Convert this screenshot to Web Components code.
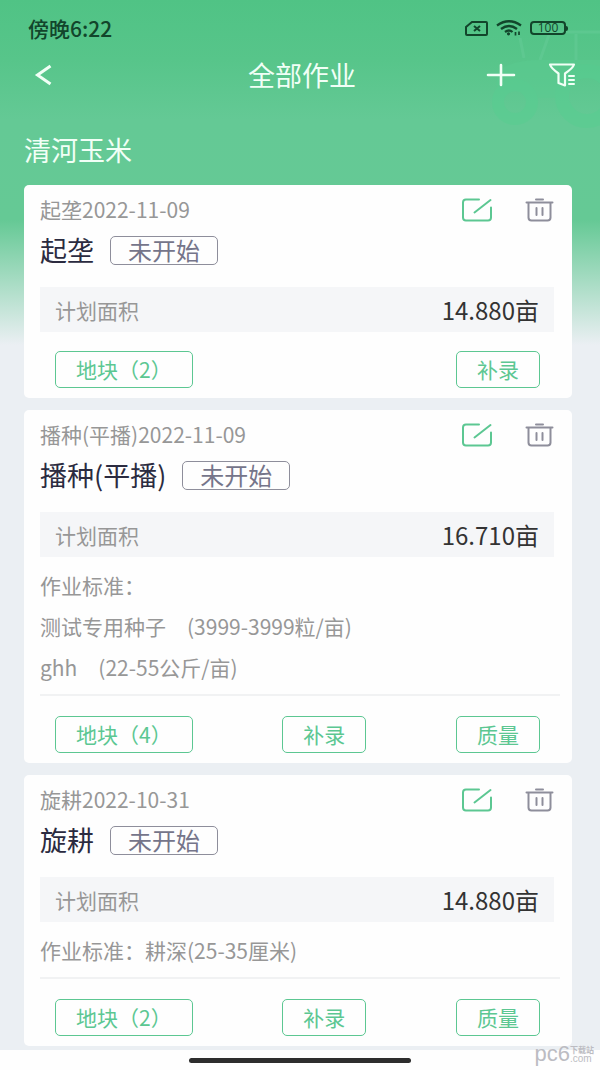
<!DOCTYPE html>
<html lang="zh-CN">
<head>
<meta charset="utf-8">
<meta name="viewport" content="width=device-width, initial-scale=1">
<title>全部作业</title>
<style>
  body {
    margin: 0;
    font-family: "Noto Sans CJK SC", "Noto Sans", sans-serif;
    font-size: 21px;
    --green: #5cc792;
    --muted: #979797;
    --ink: #2b2b40;
  }
</style>
</head>
<body>
<farm-app>
  <status-bar slot="top" time="傍晚6:22" battery="100"></status-bar>
  <nav-bar slot="top">全部作业</nav-bar>
  <span slot="group">清河玉米</span>

  <task-card date="起垄2022-11-09" name="起垄" status="未开始" area="14.880亩">
    <line-button slot="actions">地块（2）</line-button>
    <line-button slot="actions">补录</line-button>
  </task-card>

  <task-card date="播种(平播)2022-11-09" name="播种(平播)" status="未开始" area="16.710亩">
    <task-spec slot="specs">作业标准：</task-spec>
    <task-spec slot="specs">测试专用种子　(3999-3999粒/亩)</task-spec>
    <task-spec slot="specs">ghh　(22-55公斤/亩)</task-spec>
    <line-button slot="actions">地块（4）</line-button>
    <line-button slot="actions">补录</line-button>
    <line-button slot="actions">质量</line-button>
  </task-card>

  <task-card date="旋耕2022-10-31" name="旋耕" status="未开始" area="14.880亩">
    <task-spec slot="specs">作业标准：耕深(25-35厘米)</task-spec>
    <line-button slot="actions">地块（2）</line-button>
    <line-button slot="actions">补录</line-button>
    <line-button slot="actions">质量</line-button>
  </task-card>

  <home-bar slot="bottom"></home-bar>
</farm-app>

<script>
const define = (name, html, setup) => {
  const template = document.createElement('template');
  template.innerHTML = html;
  customElements.define(name, class extends HTMLElement {
    constructor() {
      super();
      this.attachShadow({ mode: 'open' }).append(template.content.cloneNode(true));
    }
    connectedCallback() {
      if (setup) setup(this, this.shadowRoot);
    }
  });
};

define('farm-app', `
  <style>
    :host {
      display: flex; flex-direction: column; min-height: 100vh; position: relative;
      background: linear-gradient(#50c385 0, #57c58a 60px, #64c995 120px, #65c995 220px, #65c99500 345px), #ebeff3;
    }
    .tractor { position: absolute; top: 24px; right: 0; width: 112px; height: 104px; }
    header { position: relative; }
    h2 { margin: 36px 24px 15px; font-size: 27px; line-height: 40px; font-weight: 400; color: #f1fff6; }
    main { flex: 1; display: flex; flex-direction: column; gap: 12px; padding: 0 28px 4px 24px; }
  </style>
  <svg class="tractor" viewBox="0 0 112 104" fill="none" stroke="#57ce91" aria-hidden="true">
    <g opacity=".5">
      <path d="M54 8H112M62 8l-10 28M88 10v26M32 14l4 20" stroke="#66cc98" stroke-width="3"/>
      <path d="M10 48q12-12 44-12h58v14q-30-4-42 24H50Q44 52 8 62z" fill="#5acb90" stroke="none"/>
      <circle cx="27" cy="78" r="17" stroke-width="12"/>
      <circle cx="99" cy="72" r="25" stroke-width="14"/>
    </g>
  </svg>
  <header>
    <slot name="top"></slot>
    <h2><slot name="group"></slot></h2>
  </header>
  <main><slot></slot></main>
  <slot name="bottom"></slot>
`);

define('status-bar', `
  <style>
    :host { display: flex; align-items: center; justify-content: space-between; height: 56px; padding: 0 32px 0 28px; color: #12452b; }
    time { font-size: 21px; line-height: 28px; font-weight: 500; }
    .icons { display: flex; align-items: center; gap: 8px; }
    svg { display: block; }
    .battery { display: flex; align-items: center; }
    .level { box-sizing: border-box; width: 36px; height: 14px; border: 2px solid; border-radius: 4px; font: 500 12px/10px "Open Sans", sans-serif; text-align: center; }
    .tip { width: 2px; height: 5px; background: currentColor; border-radius: 0 2px 2px 0; }
  </style>
  <time></time>
  <div class="icons">
    <svg width="23" height="15" viewBox="0 0 23 15" fill="none" stroke="currentColor" stroke-width="2">
      <path d="M7 1H21q1 0 1 1V13q0 1-1 1H2q-1 0-1-1V6z"/><path d="M9 5l6 5M15 5l-6 5"/>
    </svg>
    <svg width="26" height="16" viewBox="0 0 26 16" fill="none" stroke="currentColor" stroke-width="2.3">
      <path d="M1 5.500Q13-3 25 5.500M5 9q8-6 16 0M9 12q4-3 7.500 0"/>
      <circle cx="12.500" cy="13.800" r="1.600" fill="currentColor" stroke="none"/>
      <path d="M19.500 12v3.500M23 11.500V15" stroke-width="1.700"/>
    </svg>
    <div class="battery"><span class="level"></span><span class="tip"></span></div>
  </div>
`, (el, root) => {
  root.querySelector('time').textContent = el.getAttribute('time');
  root.querySelector('.level').textContent = el.getAttribute('battery');
});

define('nav-bar', `
  <style>
    :host { display: grid; grid-template-columns: 1fr auto 1fr; align-items: center; height: 38px; padding: 0 24px 0 28px; color: #f1fff6; }
    h1 { margin: 0; font-size: 27px; line-height: 38px; font-weight: 400; }
    button { display: block; padding: 0; border: 0; background: none; color: inherit; }
    svg { display: block; }
    .tools { display: flex; justify-content: flex-end; gap: 32px; }
  </style>
  <button type="button" aria-label="返回">
    <svg width="32" height="24" viewBox="0 0 32 24" fill="none" stroke="currentColor" stroke-width="3"><path d="M22.500 3L9.500 12l13 9"/></svg>
  </button>
  <h1><slot></slot></h1>
  <div class="tools">
    <button type="button" aria-label="新增">
      <svg width="30" height="24" viewBox="0 0 30 24" fill="none" stroke="currentColor" stroke-width="2.600" stroke-linecap="round"><path d="M2 12H28M15 2V22"/></svg>
    </button>
    <button type="button" aria-label="筛选">
      <svg width="28" height="24" viewBox="0 0 28 24" fill="none" stroke="currentColor" stroke-width="2.200" stroke-linejoin="round" stroke-linecap="round">
        <path d="M2 1.500H26Q25 5 17 10.500V22.500L10.500 20V10.500Q3 5 2 1.500z"/><path d="M21 13h5M21 17h5M21 21h5" stroke-width="2"/>
      </svg>
    </button>
  </div>
`);

define('task-card', `
  <style>
    :host { display: block; padding: 10px 18px 10px 16px; background: #fefefe; border-radius: 5px; }
    .top { display: flex; align-items: center; justify-content: space-between; height: 30px; }
    .date { line-height: 28px; padding-bottom: 2px; color: var(--muted); }
    .tools { display: flex; gap: 32px; }
    .tools button { display: block; padding: 0; border: 0; background: none; color: #8e8e9b; }
    .tools button:first-child { color: var(--green); }
    svg { display: block; }
    .title { display: flex; align-items: center; gap: 16px; height: 36px; margin: 7px 0 19px; }
    h3 { margin: 0; font-size: 27px; line-height: 36px; font-weight: 400; color: var(--ink); }
    .status { box-sizing: border-box; height: 29px; padding: 0 17px; border: 1px solid #8e8e9b; border-radius: 5px; font-size: 24px; line-height: 26px; color: #75758a; }
    .area { display: flex; align-items: center; justify-content: space-between; height: 45px; padding: 0 15px; background: #f5f6f8; color: var(--muted); line-height: 44px; }
    .area strong { font-size: 24px; font-weight: 400; color: #333; }
    .specs { display: flex; flex-direction: column; margin: 8px -6px 0 0; padding-bottom: 6px; border-bottom: 2px solid #f1f2f3; }
    .specs[hidden] { display: none; }
    .actions { display: flex; justify-content: space-between; margin-top: 19px; padding: 0 14px 0 15px; }
    .specs:not([hidden]) + .actions { margin-top: 20px; }
  </style>
  <div class="top">
    <span class="date"></span>
    <div class="tools">
      <button type="button" aria-label="编辑">
        <svg width="32" height="24" viewBox="0 0 32 24" fill="none" stroke="currentColor" stroke-width="2" stroke-linecap="round">
          <path d="M18 1.500H5q-3 0-3 3V19.500q0 3 3 3H27q3 0 3-3V9.500M13.500 14.500L29.500 2"/>
        </svg>
      </button>
      <button type="button" aria-label="删除">
        <svg width="29" height="24" viewBox="0 0 29 24" fill="none" stroke="currentColor" stroke-width="2" stroke-linecap="round">
          <path d="M1.500 4.500H27.500M11 1.500H18M3.500 5V19.500q0 3 3 3H22.500q3 0 3-3V5M11.500 10v7M17.500 10v7"/>
        </svg>
      </button>
    </div>
  </div>
  <div class="title"><h3></h3><span class="status"></span></div>
  <div class="area"><span>计划面积</span><strong></strong></div>
  <div class="specs"><slot name="specs"></slot></div>
  <div class="actions"><slot name="actions"></slot></div>
`, (el, root) => {
  root.querySelector('.date').textContent = el.getAttribute('date');
  root.querySelector('h3').textContent = el.getAttribute('name');
  root.querySelector('.status').textContent = el.getAttribute('status');
  root.querySelector('strong').textContent = el.getAttribute('area');
  root.querySelector('.specs').hidden = !el.querySelector('[slot="specs"]');
});

define('task-spec', `
  <style>:host { display: block; line-height: 41px; color: var(--muted); }</style>
  <slot></slot>
`);

define('line-button', `
  <style>
    :host { display: block; }
    button { display: block; box-sizing: border-box; height: 37px; padding: 0 20px; border: 1px solid var(--green); border-radius: 5px; background: none; font: inherit; line-height: 35px; color: var(--green); }
  </style>
  <button type="button"><slot></slot></button>
`);

define('home-bar', `
  <style>
    :host { display: flex; justify-content: center; align-items: center; height: 20px; background: #fefefe; position: relative; }
    .pill { width: 37%; height: 5px; border-radius: 3px; background: #2d2d2d; }
    .mark { position: absolute; right: 6px; bottom: 4px; display: flex; align-items: center; color: #bcbcc2; font-family: "Liberation Sans", sans-serif; }
    .big { font-size: 22px; line-height: 24px; }
    .small { display: flex; flex-direction: column; font-size: 10px; line-height: 10px; }
    .cn { font: 700 8px/9px "Noto Sans CJK SC", sans-serif; }
  </style>
  <div class="pill"></div>
  <div class="mark"><span class="big">pc6</span><span class="small"><span class="cn">下载站</span><span>.com</span></span></div>
`);
</script>
</body>
</html>
